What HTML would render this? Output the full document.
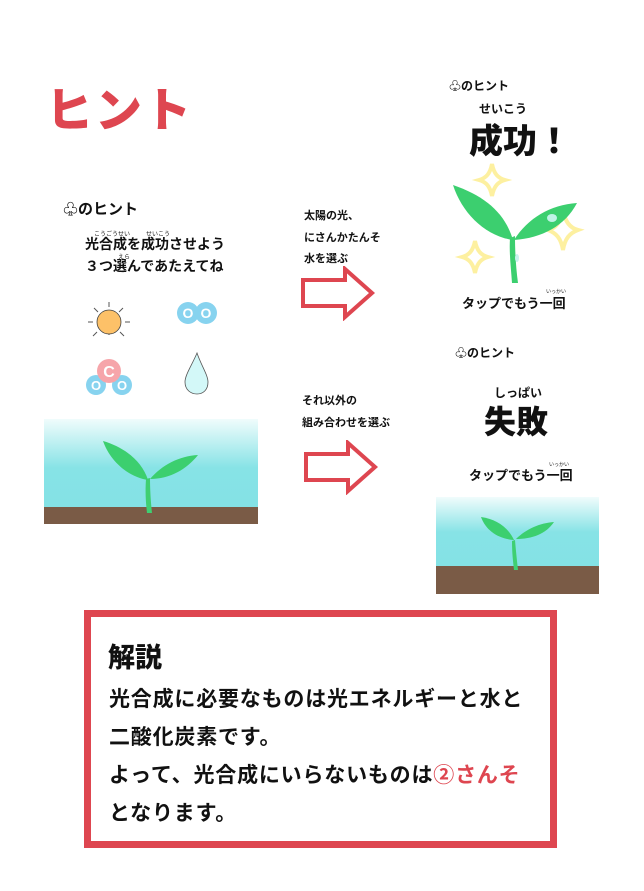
<!DOCTYPE html>
<html><head><meta charset="utf-8"><style>
*{margin:0;padding:0;box-sizing:border-box}
body{width:644px;height:891px;background:#fff;position:relative;overflow:hidden;font-family:"Liberation Sans","Noto Sans CJK JP",sans-serif;font-weight:bold;color:#111}
.a{position:absolute;white-space:nowrap}
.red{color:#de4650}
</style></head><body>
<div class="a red" style="left:46px;top:72px;font-size:47px;font-weight:900;letter-spacing:2px">ヒント</div>

<!-- left hint card -->
<div class="a" style="left:63px;top:198px;font-size:15px">♧のヒント</div>
<div class="a" style="left:94px;top:229px;font-size:6px;font-weight:normal">こうごうせい</div>
<div class="a" style="left:146px;top:229px;font-size:6px;font-weight:normal">せいこう</div>
<div class="a" style="left:85px;top:234px;font-size:14px">光合成を成功させよう</div>
<div class="a" style="left:118px;top:252px;font-size:6px;font-weight:normal">えら</div>
<div class="a" style="left:85px;top:256px;font-size:14px">３つ選んであたえてね</div>

<svg class="a" style="left:40px;top:290px" width="200" height="115" viewBox="0 0 200 115">
 <g stroke="#555" stroke-width="1">
  <line x1="69" y1="12" x2="69" y2="17"/><line x1="69" y1="40" x2="69" y2="45"/>
  <line x1="48" y1="32" x2="53" y2="32"/><line x1="85" y1="32" x2="90" y2="32"/>
  <line x1="54" y1="18" x2="58" y2="22"/><line x1="80" y1="42" x2="84" y2="46"/>
  <line x1="83" y1="18" x2="79" y2="22"/><line x1="57" y1="42" x2="53" y2="46"/>
 </g>
 <circle cx="69" cy="32" r="12" fill="#fdc168" stroke="#444" stroke-width="0.8"/>
 <circle cx="148" cy="23" r="11" fill="#87d3ef"/><circle cx="166" cy="23" r="11" fill="#87d3ef"/>
 <text x="148" y="28" fill="#fff" font-size="14" text-anchor="middle">O</text>
 <text x="166" y="28" fill="#fff" font-size="14" text-anchor="middle">O</text>
 <circle cx="56" cy="95" r="10" fill="#87d3ef"/><circle cx="82" cy="95" r="10" fill="#87d3ef"/>
 <circle cx="69" cy="81" r="12" fill="#f6a5aa"/>
 <text x="69" y="87" fill="#fff" font-size="16" text-anchor="middle">C</text>
 <text x="56" y="100" fill="#fff" font-size="13" text-anchor="middle">O</text>
 <text x="82" y="100" fill="#fff" font-size="13" text-anchor="middle">O</text>
 <path d="M157 63 C152 75 145 85 145 92 C145 100 151 104 157 104 C163 104 168 100 168 92 C168 85 161 75 157 63 Z" fill="#d3f8f8" stroke="#555" stroke-width="0.8"/>
</svg>

<svg class="a" style="left:44px;top:419px" width="214" height="105" viewBox="0 0 214 105">
 <defs><linearGradient id="s1" x1="0" y1="0" x2="0" y2="1"><stop offset="0" stop-color="#f0fcfc"/><stop offset="0.55" stop-color="#87e3e6"/><stop offset="1" stop-color="#84e2e5"/></linearGradient></defs>
 <rect width="214" height="89" fill="url(#s1)"/>
 <rect y="88" width="214" height="17" fill="#7a5b46"/>
 <path d="M102 60 C101 75 102 85 103 94 L108 94 C107 85 106 72 106 59 Z" fill="#3fcf72"/>
 <path d="M104 61 C98 42 80 28 59 22 C66 42 84 58 104 61 Z" fill="#3ccf6f"/>
 <path d="M106 60 C118 46 135 37 154 36 C143 50 126 60 106 60 Z" fill="#3ccf6f"/>
</svg>

<!-- middle -->
<div class="a" style="left:304px;top:207px;font-size:11px">太陽の光、</div>
<div class="a" style="left:304px;top:229px;font-size:11px">にさんかたんそ</div>
<div class="a" style="left:304px;top:250px;font-size:11px">水を選ぶ</div>
<svg class="a" style="left:300px;top:266px" width="76" height="55"><path d="M3 14 H45 V3 L72 27 L45 51 V40 H3 Z" fill="#fff" stroke="#de4650" stroke-width="4"/></svg>
<div class="a" style="left:302px;top:392px;font-size:11px">それ以外の</div>
<div class="a" style="left:302px;top:414px;font-size:11px">組み合わせを選ぶ</div>
<svg class="a" style="left:303px;top:440px" width="76" height="55"><path d="M3 14 H45 V3 L72 27 L45 51 V40 H3 Z" fill="#fff" stroke="#de4650" stroke-width="4"/></svg>

<!-- success -->
<div class="a" style="left:449px;top:77px;font-size:12px">♧のヒント</div>
<div class="a" style="left:479px;top:100px;font-size:12px">せいこう</div>
<div class="a" style="left:469px;top:114px;font-size:34px;font-weight:900">成功！</div>
<svg class="a" style="left:450px;top:158px" width="140" height="130" viewBox="0 0 140 130">
 <g fill="none" stroke="#fdf0a0" stroke-width="4">
  <path d="M42 6 C44 16 48 20 55 22 C48 24 44 28 42 38 C40 28 36 24 29 22 C36 20 40 16 42 6 Z"/>
  <path d="M113 52 C115 64 120 70 128 72 C120 75 115 80 113 92 C111 80 106 75 98 72 C106 70 111 64 113 52 Z"/>
  <path d="M25 83 C27 93 31 97 38 99 C31 101 27 105 25 115 C23 105 19 101 12 99 C19 97 23 93 25 83 Z"/>
 </g>
 <path d="M60 80 C59 95 61 110 62 125 L68 125 C66 110 65 95 65 78 Z" fill="#3ccf6f"/>
 <path d="M63 82 C55 55 35 38 3 27 C12 55 35 78 63 82 Z" fill="#3ccf6f"/>
 <path d="M64 82 C78 60 100 47 127 45 C115 68 92 80 64 82 Z" fill="#3ccf6f"/>
 <ellipse cx="102" cy="60" rx="5" ry="4" fill="#bff3e6"/>
 <ellipse cx="67" cy="100" rx="2" ry="4" fill="#c9f2ee"/>
</svg>
<div class="a" style="left:546px;top:288px;font-size:5px;font-weight:normal">いっかい</div>
<div class="a" style="left:462px;top:293px;font-size:13px">タップでもう一回</div>

<!-- failure -->
<div class="a" style="left:455px;top:344px;font-size:12px">♧のヒント</div>
<div class="a" style="left:494px;top:384px;font-size:12px">しっぱい</div>
<div class="a" style="left:484px;top:397px;font-size:32px;font-weight:900">失敗</div>
<div class="a" style="left:549px;top:461px;font-size:5px;font-weight:normal">いっかい</div>
<div class="a" style="left:469px;top:465px;font-size:13px">タップでもう一回</div>
<svg class="a" style="left:436px;top:497px" width="163" height="97" viewBox="0 0 163 97">
 <defs><linearGradient id="s2" x1="0" y1="0" x2="0" y2="1"><stop offset="0" stop-color="#f0fcfc"/><stop offset="0.5" stop-color="#87e3e6"/><stop offset="1" stop-color="#84e2e5"/></linearGradient></defs>
 <rect width="163" height="70" fill="url(#s2)"/>
 <rect y="69" width="163" height="28" fill="#7a5b46"/>
 <path d="M76 44 C76 56 77 64 78 73 L82 73 C81 64 80 55 79 43 Z" fill="#3fcf72"/>
 <path d="M78 43 C72 30 60 22 45 20 C50 34 63 42 78 43 Z" fill="#3ccf6f"/>
 <path d="M80 42 C90 32 104 26 118 25 C110 37 96 42 80 42 Z" fill="#3ccf6f"/>
</svg>

<!-- explanation -->
<div class="a" style="left:84px;top:610px;width:473px;height:238px;border:7px solid #de4650"></div>
<div class="a" style="left:108px;top:636px;font-size:27px;font-weight:900">解説</div>
<div class="a" style="left:109px;top:681px;font-size:21px;line-height:38px;letter-spacing:0.8px">光合成に必要なものは光エネルギーと水と<br>二酸化炭素です。<br>よって、光合成にいらないものは<span class="red">②さんそ</span><br>となります。</div>
</body></html>
